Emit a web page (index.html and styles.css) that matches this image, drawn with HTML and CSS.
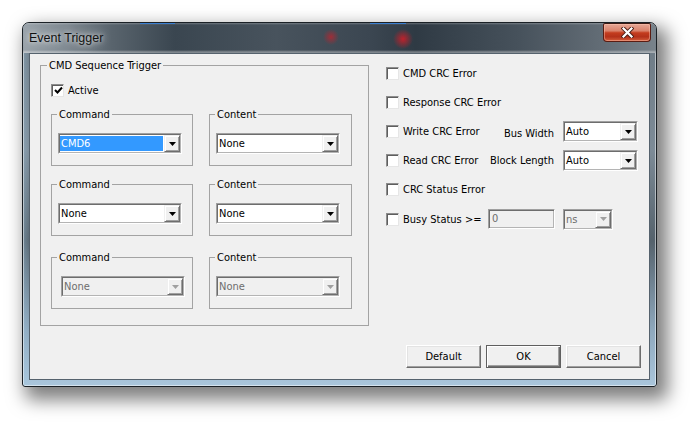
FILE: index.html
```html
<!DOCTYPE html>
<html>
<head>
<meta charset="utf-8">
<title>Event Trigger</title>
<link rel="stylesheet" href="styles.css">
</head>
<body>
<div class="desktop">
  <div class="window">
    <div class="titlebar">
      <span class="title">Event Trigger</span>
      <button class="close" type="button" aria-label="Close">
        <svg width="13" height="11" viewBox="0 0 13 11"><path d="M2.5 1.5 L10.5 9.5 M10.5 1.5 L2.5 9.5" stroke="#4a1e16" stroke-width="4" stroke-linecap="square" fill="none"/><path d="M2.5 1.5 L10.5 9.5 M10.5 1.5 L2.5 9.5" stroke="#fff" stroke-width="2.2" stroke-linecap="square" fill="none"/></svg>
      </button>
    </div>
    <div class="client">
      <div class="content">
        <fieldset class="group main">
          <legend>CMD Sequence Trigger</legend>
          <label class="check active-row"><span class="box"><svg width="9" height="9" viewBox="0 0 9 9"><path d="M1 4 L3.5 6.5 L8 1.5" stroke="#000" stroke-width="2" fill="none"/></svg></span>Active</label>
          <div class="pair first">
            <fieldset class="group sub"><legend>Command</legend>
              <div class="combo"><div class="combo-in"><span class="value selected">CMD6</span><span class="arrow"><svg width="7" height="4" viewBox="0 0 7 4"><path d="M0 0h7L3.5 4z"/></svg></span></div></div>
            </fieldset>
            <fieldset class="group sub"><legend>Content</legend>
              <div class="combo"><div class="combo-in"><span class="value">None</span><span class="arrow"><svg width="7" height="4" viewBox="0 0 7 4"><path d="M0 0h7L3.5 4z"/></svg></span></div></div>
            </fieldset>
          </div>
          <div class="pair second">
            <fieldset class="group sub"><legend>Command</legend>
              <div class="combo"><div class="combo-in"><span class="value">None</span><span class="arrow"><svg width="7" height="4" viewBox="0 0 7 4"><path d="M0 0h7L3.5 4z"/></svg></span></div></div>
            </fieldset>
            <fieldset class="group sub"><legend>Content</legend>
              <div class="combo"><div class="combo-in"><span class="value">None</span><span class="arrow"><svg width="7" height="4" viewBox="0 0 7 4"><path d="M0 0h7L3.5 4z"/></svg></span></div></div>
            </fieldset>
          </div>
          <div class="pair third">
            <fieldset class="group sub"><legend>Command</legend>
              <div class="combo disabled shifted"><div class="combo-in"><span class="value">None</span><span class="arrow"><svg width="7" height="4" viewBox="0 0 7 4"><path d="M0 0h7L3.5 4z"/></svg></span></div></div>
            </fieldset>
            <fieldset class="group sub"><legend>Content</legend>
              <div class="combo disabled"><div class="combo-in"><span class="value">None</span><span class="arrow"><svg width="7" height="4" viewBox="0 0 7 4"><path d="M0 0h7L3.5 4z"/></svg></span></div></div>
            </fieldset>
          </div>
        </fieldset>

        <div class="options">
          <div class="opt tall"><label class="check"><span class="box"></span>CMD CRC Error</label></div>
          <div class="opt"><label class="check"><span class="box"></span>Response CRC Error</label></div>
          <div class="opt">
            <label class="check w-fixed"><span class="box"></span>Write CRC Error</label>
            <span class="side-label low">Bus Width</span>
            <div class="combo small"><div class="combo-in"><span class="value">Auto</span><span class="arrow"><svg width="7" height="4" viewBox="0 0 7 4"><path d="M0 0h7L3.5 4z"/></svg></span></div></div>
          </div>
          <div class="opt">
            <label class="check w-fixed"><span class="box"></span>Read CRC Error</label>
            <span class="side-label">Block Length</span>
            <div class="combo small"><div class="combo-in"><span class="value">Auto</span><span class="arrow"><svg width="7" height="4" viewBox="0 0 7 4"><path d="M0 0h7L3.5 4z"/></svg></span></div></div>
          </div>
          <div class="opt"><label class="check"><span class="box"></span>CRC Status Error</label></div>
          <div class="opt tall">
            <label class="check busy"><span class="box"></span>Busy Status &gt;=</label>
            <div class="textbox disabled">0</div>
            <div class="combo tiny disabled"><div class="combo-in"><span class="value">ns</span><span class="arrow"><svg width="7" height="4" viewBox="0 0 7 4"><path d="M0 0h7L3.5 4z"/></svg></span></div></div>
          </div>
        </div>
      </div>

      <div class="footer">
        <button class="btn" type="button">Default</button>
        <button class="btn default" type="button">OK</button>
        <button class="btn" type="button">Cancel</button>
      </div>
    </div>
  </div>
</div>
</body>
</html>
```

FILE: styles.css
```css
html, body {
  margin: 0;
  padding: 0;
  background: #ffffff;
}

.desktop {
  box-sizing: border-box;
  min-height: 430px;
  padding: 22px 0 0 22px;
  font-family: "DejaVu Sans Condensed", "Liberation Sans", sans-serif;
  font-size: 11px;
  color: #000;
}

.window {
  width: 635px;
  height: 365px;
  box-sizing: border-box;
  border: 1px solid #1b2126;
  border-radius: 7px 7px 3px 3px;
  background:
    linear-gradient(to right, rgba(160, 200, 225, 0.35) 0, rgba(160, 200, 225, 0) 8px),
    linear-gradient(to bottom, #6c7983 0%, #7d8b97 35%, #55626c 60%, #8fa9be 85%, #aac6dc 100%);
  box-shadow: 7px 9px 18px 4px rgba(0, 0, 0, 0.5), inset 0 0 0 1px rgba(255, 255, 255, 0.5);
  display: flex;
  flex-direction: column;
}

.titlebar {
  height: 30px;
  display: flex;
  align-items: flex-start;
  justify-content: space-between;
  border-radius: 6px 6px 0 0;
  background:
    linear-gradient(to right, transparent 117px, #3b7fd0 117px, #3b7fd0 152px, transparent 152px, transparent 347px, #3b7fd0 347px, #3b7fd0 383px, transparent 383px) top / 100% 1px no-repeat,
    radial-gradient(circle at 308px 14px, rgba(190, 35, 45, 0.75) 0, rgba(190, 35, 45, 0) 8px),
    radial-gradient(circle at 380px 16px, rgba(205, 30, 40, 0.9) 0, rgba(205, 30, 40, 0) 10px),
    linear-gradient(to bottom, rgba(255, 255, 255, 0.25) 0, rgba(255, 255, 255, 0) 2px, rgba(255, 255, 255, 0) 27px, rgba(255, 255, 255, 0.35) 29px),
    linear-gradient(to right, #9aa3aa 0%, #7f8991 7%, #59646d 14%, #3a4650 24%, #48535d 40%, #3b4651 55%, #2f3a44 62%, #46515b 78%, #646e77 92%, #79838b 100%);
}

.title {
  line-height: 30px;
  padding-left: 6px;
  font-family: "Liberation Sans", "Open Sans", sans-serif;
  font-size: 12.5px;
  color: #111;
  text-shadow: 0 0 8px rgba(255, 255, 255, 0.9), 0 0 4px rgba(255, 255, 255, 0.6);
}

.close {
  width: 48px;
  height: 19px;
  margin: 0 5px 0 0;
  padding: 0;
  box-sizing: border-box;
  border: 1px solid #5a1c12;
  border-top-color: #3a1a14;
  border-radius: 2px 2px 4px 4px;
  background: linear-gradient(to bottom, #e6a796 0%, #d9826b 40%, #c43c1e 52%, #b3311a 75%, #d35d3b 100%);
  box-shadow: inset 0 0 0 1px rgba(255, 200, 180, 0.45);
  display: flex;
  align-items: center;
  justify-content: center;
}

.close svg {
  display: block;
}

.client {
  flex: 1;
  margin: 0 6px 6px 6px;
  box-sizing: border-box;
  border: 1px solid #55626d;
  background: #f0f0f0;
  display: flex;
  flex-direction: column;
}

.content {
  display: flex;
  align-items: flex-start;
}

/* Group boxes */
.group {
  margin: 0;
  border: 1px solid #a3a3a3;
  box-sizing: border-box;
  min-width: 0;
}

.group > legend {
  padding: 0 2px;
  line-height: 13px;
  height: 13px;
}

.main {
  width: 329px;
  margin: 5px 0 0 10px;
  padding: 11px 16px 16px 10px;
}

.main > legend {
  margin-left: -4px;
}

.active-row {
  height: 14px;
}

.pair {
  display: flex;
  gap: 16px;
}

.pair.first {
  margin-top: 11px;
}

.pair.second {
  margin-top: 12px;
}

.pair.third {
  margin-top: 15px;
}

.sub {
  width: 142px;
  padding: 12px 6px 11px 6px;
}

.sub + .sub {
  width: 143px;
}

.sub > legend {
  margin-left: -1px;
}

/* Checkboxes */
.check {
  display: flex;
  align-items: center;
  gap: 4px;
  white-space: nowrap;
}

.box {
  width: 13px;
  height: 13px;
  box-sizing: border-box;
  border: 1px solid;
  border-color: #8d8d8d #e6e6e6 #e6e6e6 #8d8d8d;
  box-shadow: inset 1px 1px 0 #5e5e5e;
  background: #ffffff;
  display: flex;
  align-items: center;
  justify-content: center;
  flex: none;
}

.box svg {
  display: block;
  margin: 1px 0 0 1px;
}

/* Combos */
.combo {
  width: 124px;
  height: 21px;
  box-sizing: border-box;
  border: 1px solid;
  border-color: #a0a0a0 #ffffff #ffffff #a0a0a0;
  background: #ffffff;
  display: flex;
}

.combo.shifted {
  margin-left: 3px;
}

.combo-in {
  flex: 1;
  display: flex;
  border: 1px solid;
  border-color: #6d6d6d #b4b4b4 #b4b4b4 #6d6d6d;
  min-width: 0;
}

.value {
  flex: 1;
  line-height: 15px;
  margin: 1px 1px 1px 0;
  padding-left: 1px;
  white-space: nowrap;
  overflow: hidden;
}

.value.selected {
  background: #3399ff;
  color: #ffffff;
}

.arrow {
  width: 16px;
  box-sizing: border-box;
  background: #f0f0f0;
  border: 1px solid;
  border-color: #f0f0f0 #6d6d6d #6d6d6d #f0f0f0;
  box-shadow: inset 1px 1px 0 #ffffff, inset -1px -1px 0 #a0a0a0;
  display: flex;
  align-items: center;
  justify-content: center;
  flex: none;
}

.arrow svg {
  display: block;
  fill: #000;
}

.combo.disabled {
  background: #f0f0f0;
  color: #6d6d6d;
}

.combo.disabled .arrow svg {
  fill: #a0a0a0;
}

.combo.small {
  width: 75px;
}

.combo.tiny {
  width: 50px;
}

/* Right options */
.options {
  margin: 4px 0 0 17px;
  width: 252px;
  display: flex;
  flex-direction: column;
}

.opt {
  height: 29px;
  display: flex;
  align-items: center;
}

.opt.tall {
  height: 30px;
}

.w-fixed {
  width: 100px;
}

.side-label {
  flex: 1;
  text-align: right;
  margin-right: 9px;
}

.side-label.low {
  padding-top: 3px;
}

.busy {
  width: 102px;
}

.textbox {
  width: 67px;
  height: 20px;
  box-sizing: border-box;
  border: 1px solid;
  border-color: #a0a0a0 #ffffff #ffffff #a0a0a0;
  box-shadow: inset 1px 1px 0 #6d6d6d, inset -1px -1px 0 #b4b4b4;
  padding: 0 3px;
  line-height: 18px;
  margin-right: 8px;
}

.textbox.disabled {
  background: #f0f0f0;
  color: #6d6d6d;
}

/* Buttons */
.footer {
  margin-top: auto;
  display: flex;
  justify-content: flex-end;
  gap: 5px;
  padding: 0 8px 11px 0;
}

.btn {
  width: 75px;
  height: 23px;
  margin: 0;
  padding: 0;
  box-sizing: border-box;
  font: inherit;
  color: #000;
  background: #f0f0f0;
  border: 1px solid;
  border-color: #ffffff #6d6d6d #6d6d6d #ffffff;
  box-shadow: inset -1px -1px 0 #a0a0a0, inset 1px 1px 0 #e3e3e3;
}

.btn.default {
  border: 1px solid #5f5f5f;
  box-shadow: inset 1px 1px 0 #ffffff, inset -1px -1px 0 #6d6d6d, inset -2px -2px 0 #a0a0a0;
}
```
